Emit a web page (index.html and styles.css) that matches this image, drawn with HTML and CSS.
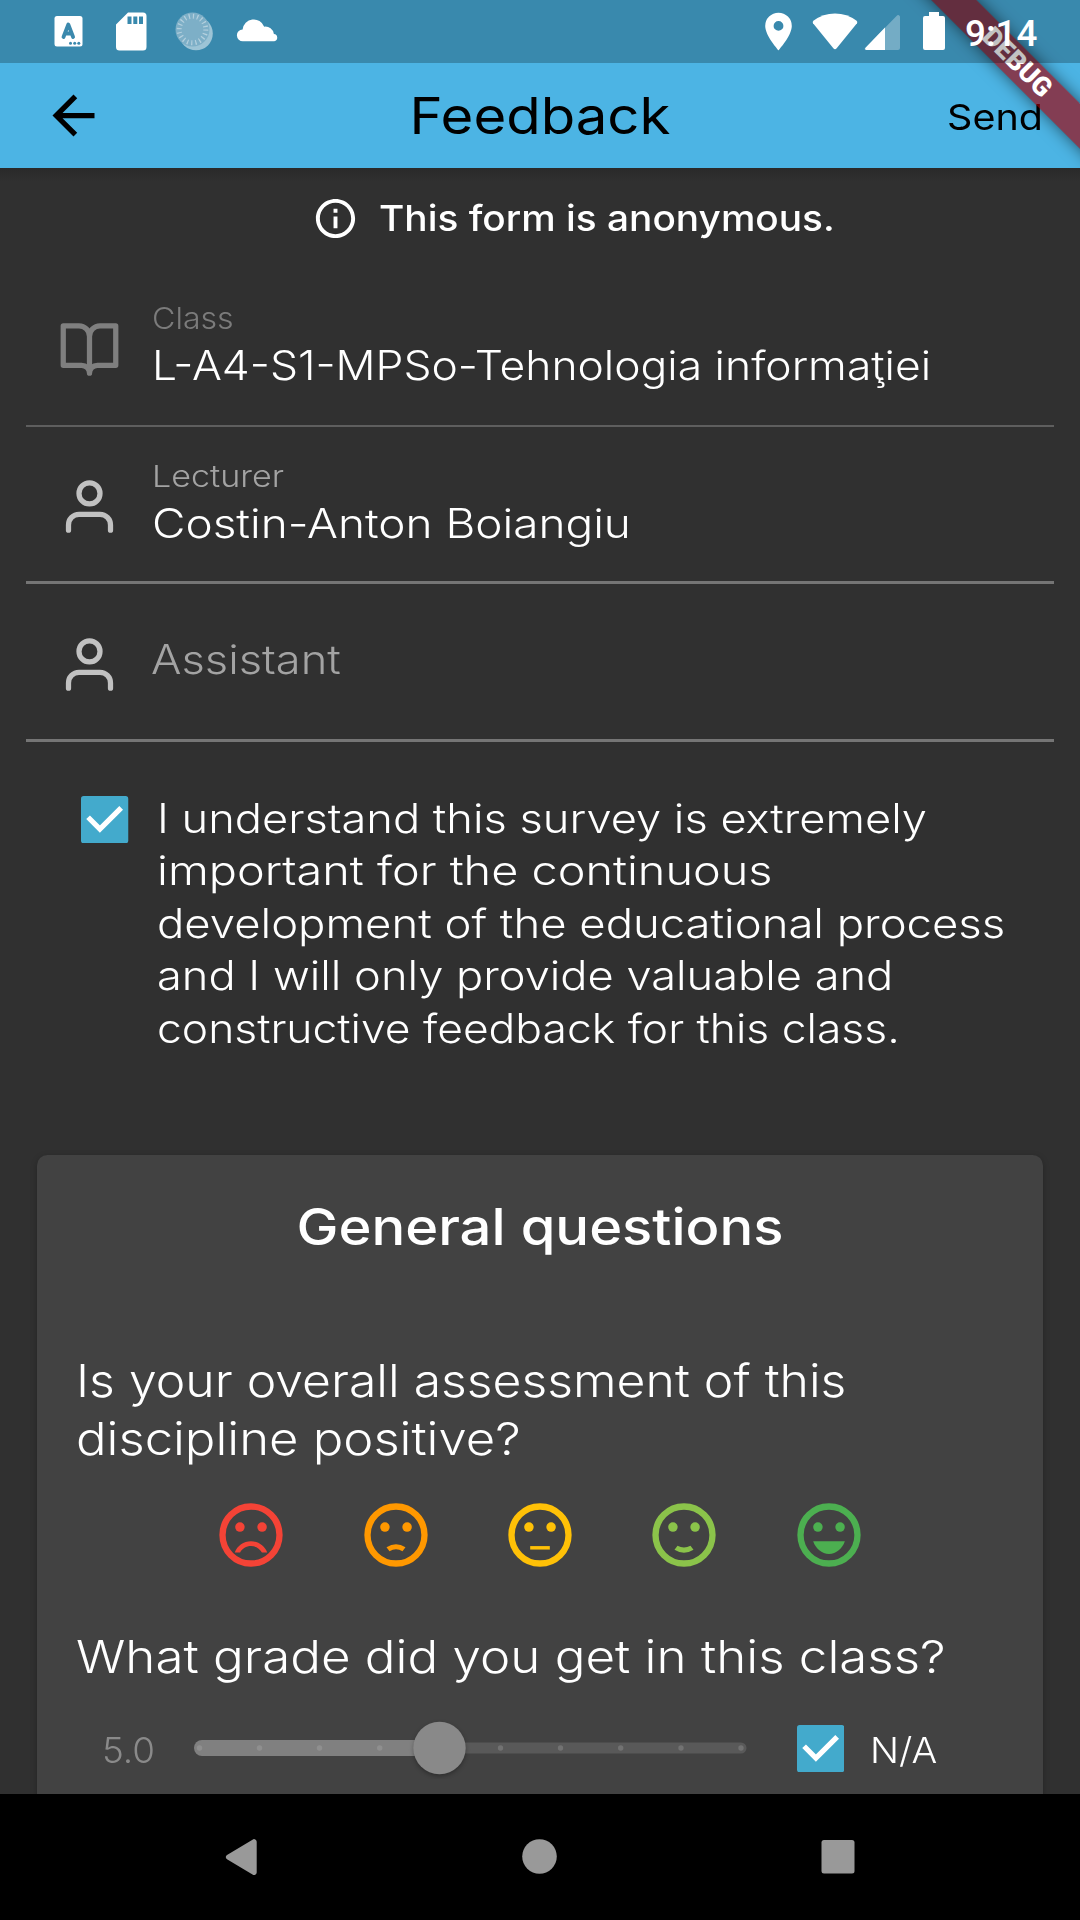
FILE: index.html
```html
<!DOCTYPE html>
<html lang="en">
<head>
<meta charset="utf-8">
<title>Feedback</title>
<link rel="stylesheet" href="styles.css">
</head>
<body>
<div class="screen">
  <header class="header">
    <div class="status">
      <svg class="status-left" viewBox="0 0 300 63" width="300" height="63" fill="#fff">
        <path d="M57 16h23a2.500 2.500 0 0 1 2.500 2.500v25.500a2.500 2.500 0 0 1-2.500 2.500H57a2.500 2.500 0 0 1-2.500-2.500V18.500A2.500 2.500 0 0 1 57 16z"/>
        <path d="M63.500 37l4.800-12.500 4.800 12.500M65 33.500h6.500" fill="none" stroke="#3b89ad" stroke-width="3.800" stroke-linecap="round" stroke-linejoin="round"/>
        <g fill="#3b89ad"><circle cx="70.500" cy="43.300" r="1.500"/><circle cx="74.700" cy="43.300" r="1.500"/><circle cx="78.800" cy="43.300" r="1.500"/></g>
        <path fill-rule="evenodd" d="M128 12.500h15a3.500 3.500 0 0 1 3.500 3.500v31a3.500 3.500 0 0 1-3.500 3.500h-23.500A3.500 3.500 0 0 1 116 47V24.500zM127.500 16.500v7.500h4v-7.500zM133.300 16.500v7.500h4v-7.500zM139 16.500v7.500h4v-7.500z"/>
        <circle cx="196" cy="33.500" r="16.800" opacity=".5"/>
        <path d="M208.500 24a17 17 0 0 1-22 22.500a17 17 0 0 0 22-22.500z"/>
        <circle cx="192.500" cy="29.500" r="17" fill="#7dafc7"/>
        <circle cx="192.500" cy="29.500" r="13.300" fill="none" stroke="#b4d0de" stroke-width="5" stroke-dasharray="1.200 2.978"/>
        <path d="M243 41.300a5.900 5.900 0 0 1-.4-11.800a11.200 11.200 0 0 1 21.600-2.800a8.600 8.600 0 0 1 9.700 7.300a3.700 3.700 0 0 1 .4 7.300z"/>
      </svg>
      <svg class="status-right" viewBox="760 0 190 63" width="190" height="63" fill="#fff">
        <path fill-rule="evenodd" d="M778.500 12.700a13.300 13.300 0 0 0-13.300 13.300c0 9.700 13.300 24.300 13.300 24.300s13.300-14.600 13.300-24.300a13.300 13.300 0 0 0-13.300-13.300zM778.500 21a4.900 4.900 0 1 1 0 9.800a4.900 4.900 0 0 1 0-9.800z"/>
        <path d="M813 23.300a2 2 0 0 1 .4-2.500a35.500 35.500 0 0 1 43.200 0a2 2 0 0 1 .4 2.500L836.700 48.200a2.200 2.200 0 0 1-3.400 0z"/>
        <path d="M866 50a1 1 0 0 1-.7-2l31.500-32.300a1.800 1.800 0 0 1 3.200 1.300v31a2 2 0 0 1-2 2z" opacity=".3"/>
        <path d="M866.500 50a1.300 1.300 0 0 1-1-2.200L885 27.500V50z"/>
        <path d="M929 12h10v4h4a2 2 0 0 1 2 2v30a2 2 0 0 1-2 2h-18a2 2 0 0 1-2-2V18a2 2 0 0 1 2-2h4z"/>
      </svg>
      <span class="clock">9:14</span>
    </div>
    <div class="appbar">
      <svg class="back" viewBox="0 0 24 24" width="63" height="63"><path d="M20 11H7.830l5.590-5.590L12 4l-8 8 8 8 1.410-1.410L7.830 13H20v-2z"/></svg>
      <h1 class="title">Feedback</h1>
      <span class="send">Send</span>
    </div>
    <div class="ribbon"><span>DEBUG</span></div>
  </header>

  <main class="content">
    <p class="notice">
      <svg viewBox="0 0 24 24" width="47" height="47" fill="#fff"><path d="M11 7h2v2h-2zm0 4h2v6h-2zm1-9C6.480 2 2 6.480 2 12s4.480 10 10 10 10-4.480 10-10S17.520 2 12 2zm0 18c-4.410 0-8-3.590-8-8s3.590-8 8-8 8 3.590 8 8-3.590 8-8 8z"/></svg>
      <span class="wide notice-text">This form is anonymous.</span>
    </p>

    <div class="field field-disabled">
      <svg class="field-icon" viewBox="0 0 24 24" width="63" height="63"><path d="M2 3h6a4 4 0 0 1 4 4v14a3 3 0 0 0-3-3H2zM22 3h-6a4 4 0 0 0-4 4v14a3 3 0 0 1 3-3h7z"/></svg>
      <div><div class="wide label label-class">Class</div><div class="wide value value-class">L-A4-S1-MPSo-Tehnologia informaţiei</div></div>
    </div>
    <div class="field field-lecturer">
      <svg class="field-icon" viewBox="0 0 24 24" width="63" height="63"><path d="M20 21v-2a4 4 0 0 0-4-4H8a4 4 0 0 0-4 4v2"/><circle cx="12" cy="7" r="4"/></svg>
      <div><div class="wide label">Lecturer</div><div class="wide value value-lecturer">Costin-Anton Boiangiu</div></div>
    </div>
    <div class="field">
      <svg class="field-icon" viewBox="0 0 24 24" width="63" height="63"><path d="M20 21v-2a4 4 0 0 0-4-4H8a4 4 0 0 0-4 4v2"/><circle cx="12" cy="7" r="4"/></svg>
      <div class="wide value placeholder">Assistant</div>
    </div>

    <div class="consent">
      <svg class="check" viewBox="0 0 18 18" width="47.250" height="47.250"><rect width="18" height="18" rx="1"/><path d="M2.700 8.100l4.500 4.500 8.100-8.100"/></svg>
      <p class="consent-text">
        <span class="wide c1">I understand this survey is extremely</span>
        <span class="wide c2">important for the continuous</span>
        <span class="wide c3">development of the educational process</span>
        <span class="wide c4">and I will only provide valuable and</span>
        <span class="wide c5">constructive feedback for this class.</span>
      </p>
    </div>

    <section class="card">
      <h2 class="card-title">General questions</h2>
      <p class="question"><span class="wide q1">Is your overall assessment of this</span><span class="wide q2">discipline positive?</span></p>
      <div class="faces">
        <svg class="face red" viewBox="0 0 24 24"><circle class="ring" cx="12" cy="12" r="9"/><circle cx="8.500" cy="9.500" r="1.500"/><circle cx="15.500" cy="9.500" r="1.500"/><path d="M12 14c-2.330 0-4.320 1.450-5.120 3.500h1.670c.69-1.190 1.970-2 3.450-2s2.750.81 3.450 2h1.670c-.8-2.050-2.790-3.500-5.120-3.500z"/></svg>
        <svg class="face orange" viewBox="0 0 24 24"><circle class="ring" cx="12" cy="12" r="9"/><circle cx="8.500" cy="9.500" r="1.500"/><circle cx="15.500" cy="9.500" r="1.500"/><path d="M9 15.850q3-1.900 6 0l-.95 1.250q-2.050-1.150-4.100 0z"/></svg>
        <svg class="face amber" viewBox="0 0 24 24"><circle class="ring" cx="12" cy="12" r="9"/><circle cx="8.500" cy="9.500" r="1.500"/><circle cx="15.500" cy="9.500" r="1.500"/><path d="M8.900 15.500h6.200v1.100H8.900z"/></svg>
        <svg class="face lime" viewBox="0 0 24 24"><circle class="ring" cx="12" cy="12" r="9"/><circle cx="8.500" cy="9.500" r="1.500"/><circle cx="15.500" cy="9.500" r="1.500"/><path d="M9 16.650q3 1.900 6 0l-.95-1.250q-2.050 1.150-4.100 0z"/></svg>
        <svg class="face green" viewBox="0 0 24 24"><circle class="ring" cx="12" cy="12" r="9"/><circle cx="8.500" cy="9.500" r="1.500"/><circle cx="15.500" cy="9.500" r="1.500"/><path d="M12 18c2.280 0 4.220-1.660 5-4H7c.78 2.340 2.720 4 5 4z"/></svg>
      </div>
      <p class="question question-grade"><span class="wide q3">What grade did you get in this class?</span></p>
      <div class="grade">
        <span class="wide grade-value">5.0</span>
        <svg class="slider" viewBox="190 1719 560 60" width="560" height="60">
          <rect x="400" y="1742.500" width="346.500" height="11" rx="5.500" fill="#595959"/>
          <rect x="194" y="1740" width="250" height="16" rx="8" fill="#808080"/>
          <g fill="#8f8f8f"><circle cx="199.500" cy="1748" r="2.700"/><circle cx="259.500" cy="1748" r="2.700"/><circle cx="319.500" cy="1748" r="2.700"/><circle cx="379.700" cy="1748" r="2.700"/></g>
          <g fill="#727272"><circle cx="500.500" cy="1748" r="2.700"/><circle cx="560.500" cy="1748" r="2.700"/><circle cx="620.700" cy="1748" r="2.700"/><circle cx="681" cy="1748" r="2.700"/><circle cx="741" cy="1748" r="2.700"/></g>
          <circle class="thumb" cx="439.500" cy="1748" r="26.200"/>
        </svg>
        <svg class="check" viewBox="0 0 18 18" width="47.250" height="47.250"><rect width="18" height="18" rx="1"/><path d="M2.700 8.100l4.500 4.500 8.100-8.100"/></svg>
        <span class="wide na">N/A</span>
      </div>
    </section>
  </main>

  <nav class="nav">
    <svg viewBox="0 0 1080 126" width="1080" height="126" fill="#999">
      <path d="M227 60.900L252.500 45.700a2.600 2.600 0 0 1 4.200 2.200v30.300a2.600 2.600 0 0 1-4.200 2.200L227 65.200a2.500 2.500 0 0 1 0-4.300z"/>
      <circle cx="539.500" cy="62.500" r="17.300"/>
      <rect x="821.500" y="46" width="33" height="33.500" rx="2.500"/>
    </svg>
  </nav>
</div>
</body>
</html>
```
FILE: styles.css
```css
* { box-sizing: border-box; }
body { margin: 0; background: #303030; color: #fff; font-family: Inter, "Liberation Sans", sans-serif; font-weight: 345; }
h1, h2, p { margin: 0; }
svg { display: block; flex: none; }
span { white-space: nowrap; }

/* Widened text: each line is stretched from its left edge. */
.wide { transform-origin: 0 50%; }

.screen { width: 1080px; height: 1920px; display: flex; flex-direction: column; overflow: hidden; }

.header { position: relative; z-index: 1; height: 168px; background: #4cb4e4; overflow: hidden; flex: none; }
.status { position: relative; z-index: 2; height: 63px; display: flex; background: rgba(0, 0, 0, .24); }
.status-right { margin-left: 460px; }
.clock { margin-left: 15px; font: 500 36.750px/63px Roboto, sans-serif; padding-top: 2px; }
.appbar { height: 105px; display: grid; grid-template-columns: 240px 1fr 240px; align-items: center; color: #000; }
.back { margin-left: 42px; }
.title { text-align: center; font-size: 50.500px; font-weight: 430; transform: scaleX(1.115); }
.send { justify-self: end; margin-right: 37px; padding-top: 3px; font-size: 35.400px; font-weight: 430; transform: scaleX(1.115); transform-origin: 100% 50%; }
.ribbon { position: absolute; z-index: 1; left: 867px; top: 47.250px; width: 300px; height: 31.500px; transform: rotate(45deg); background: rgba(160, 0, 8, .66); box-shadow: 0 0 16px rgba(0, 0, 0, .55); text-align: center; font: 900 26.800px/31.500px Roboto, sans-serif; }

.content { flex: 1; min-height: 0; overflow: hidden; background: linear-gradient(#292929, #303030 14px); }
.notice { height: 100px; display: flex; align-items: center; padding-left: 312px; gap: 20px; font-size: 35.400px; font-weight: 460; }
.notice-text { transform: scaleX(1.096); }

.field { height: 158px; margin: 0 26px; padding: 29px 0 0 31.500px; display: flex; align-items: flex-start; gap: 31px; border-bottom: 3px solid #757575; }
.field-icon { margin-top: 19.500px; fill: none; stroke: #c1c1c1; stroke-width: 2; stroke-linecap: round; stroke-linejoin: round; }
.field-disabled { height: 159px; padding-top: 30px; border-bottom: 2px solid #5e5e5e; }
.field-disabled .field-icon { margin-top: 20px; stroke: #7f7f7f; }
.field-lecturer { height: 157px; padding-top: 28.500px; }
.label { height: 40px; line-height: 40px; font-size: 30.300px; transform: scaleX(1.125); color: #a3a3a3; }
.label-class { transform: scaleX(1.06); color: #7b7b7b; }
.value { height: 54px; line-height: 56px; font-size: 40.400px; white-space: nowrap; }
.value-class { transform: scaleX(1.1); }
.value-lecturer { transform: scaleX(1.137); }
.placeholder { margin: 19px 0 0 -1px; transform: scaleX(1.12); color: #a3a3a3; }

.check rect { fill: #43aacc; }
.check path { fill: none; stroke: #fff; stroke-width: 2; }
.consent { height: 413px; padding: 50.500px 0 0 81.300px; display: flex; gap: 28.700px; }
.consent .check { margin-top: 3.500px; }
.consent-text { font-size: 40.400px; line-height: 52.500px; }
.consent-text span { display: block; }
.c1 { transform: scaleX(1.119); }
.c2 { transform: scaleX(1.159); }
.c3 { transform: scaleX(1.125); }
.c4 { transform: scaleX(1.119); }
.c5 { transform: scaleX(1.099); }

.card { width: 1006px; height: 700px; margin-left: 37px; padding: 39.500px 39px 0; border-radius: 10.500px; background: #424242; box-shadow: 0 2px 6px rgba(0, 0, 0, .25); }
.card-title { line-height: 64px; text-align: center; font-size: 50.500px; font-weight: 450; transform: scaleX(1.112); }
.question { margin-top: 93px; font-size: 45.500px; line-height: 58px; }
.question span { display: block; }
.q1 { transform: scaleX(1.097); }
.q2 { transform: scaleX(1.116); }
.q3 { transform: scaleX(1.122); }
.faces { margin: 29.500px 0 0 137.400px; display: flex; gap: 68.300px; }
.face { width: 76px; height: 76px; fill: currentColor; }
.ring { fill: none; stroke: currentColor; stroke-width: 2; }
.red { color: #f44336; }
.orange { color: #ff9800; }
.amber { color: #ffc107; }
.lime { color: #8bc34a; }
.green { color: #4caf50; }
.question-grade { margin-top: 55px; }
.grade { margin-top: 21.500px; height: 82px; display: flex; align-items: center; font-size: 35.400px; }
.grade-value { width: 88px; margin-left: 26px; padding-top: 3px; color: #8a8a8a; transform: scaleX(1.04); }
.grade .check { margin-left: 46.500px; }
.thumb { fill: #898989; filter: drop-shadow(0 2px 2px rgba(0, 0, 0, .3)); }
.na { margin-left: 26.500px; padding-top: 3px; transform: scaleX(1.08); }

.nav { height: 126px; flex: none; background: #000; }
```
